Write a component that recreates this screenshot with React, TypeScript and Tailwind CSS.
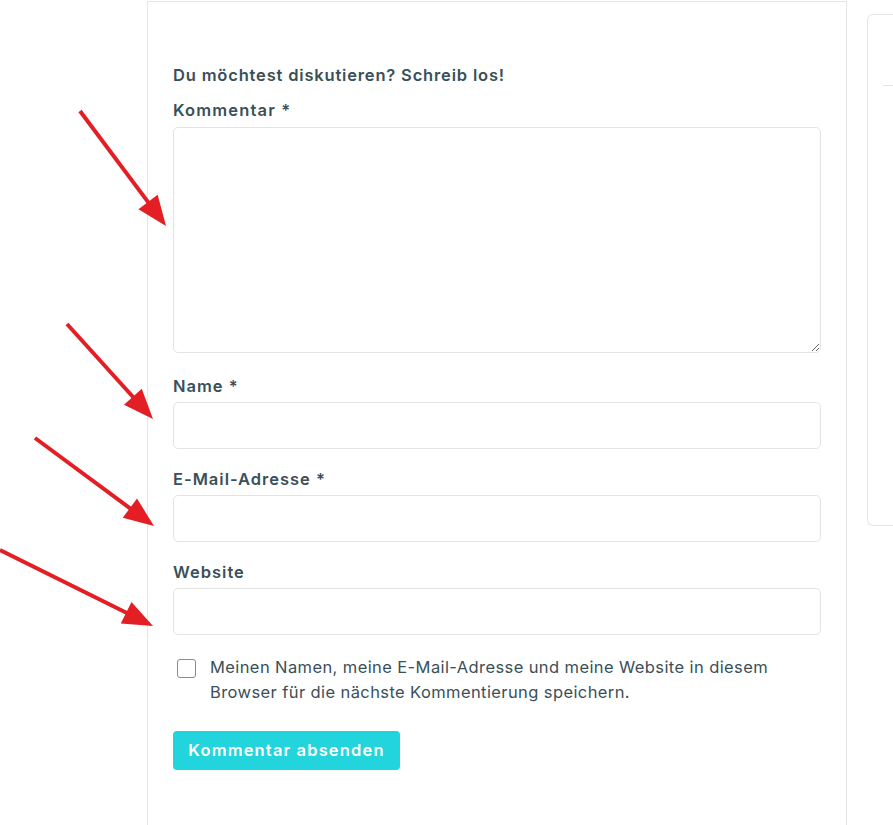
import React from "react";

const head = { fontFamily: "Inter, 'Noto Sans', sans-serif" };

function Arrow({ x1, y1, x2, y2 }: { x1: number; y1: number; x2: number; y2: number }) {
  const dx = x2 - x1;
  const dy = y2 - y1;
  const len = Math.hypot(dx, dy);
  const ux = dx / len;
  const uy = dy / len;
  const hl = 30;
  const hw = 12;
  const bx = x2 - ux * hl;
  const by = y2 - uy * hl;
  const p1 = `${bx - uy * hw},${by + ux * hw}`;
  const p2 = `${bx + uy * hw},${by - ux * hw}`;
  return (
    <g>
      <line x1={x1} y1={y1} x2={bx + ux * 2} y2={by + uy * 2} stroke="#e31e24" strokeWidth={4} />
      <polygon points={`${x2},${y2} ${p1} ${p2}`} fill="#e31e24" />
    </g>
  );
}

export default function App() {
  return (
    <div className="relative w-[893px] h-[825px] bg-white overflow-hidden" style={head}>
      <div className="flex h-full">
        <div className="w-[147px] shrink-0" />
        <div className="w-[700px] shrink-0 border-l border-r border-t border-[#e6e6e6] mt-px pl-[25px] pr-[25px] pt-[61px] text-[#3a5058]">
          <h3 className="text-[16.5px] leading-6 font-semibold tracking-[0.05em]">Du möchtest diskutieren? Schreib los!</h3>
          <label className="block mt-[11px] text-[16.5px] leading-6 font-semibold tracking-[0.07em]">Kommentar *</label>
          <textarea className="block mt-[5px] w-full h-[226px] border border-[#e3e3e3] rounded-[5px] bg-white" />
          <label className="block mt-[21px] text-[16.5px] leading-6 font-semibold tracking-[0.06em]">Name *</label>
          <input className="block mt-[4px] w-full h-[47px] border border-[#e3e3e3] rounded-[5px]" />
          <label className="block mt-[18px] text-[16.5px] leading-6 font-semibold tracking-[0.06em]">E-Mail-Adresse *</label>
          <input className="block mt-[4px] w-full h-[47px] border border-[#e3e3e3] rounded-[5px]" />
          <label className="block mt-[18px] text-[16.5px] leading-6 font-semibold tracking-[0.06em]">Website</label>
          <input className="block mt-[4px] w-full h-[47px] border border-[#e3e3e3] rounded-[5px]" />
          <div className="flex mt-[20px]">
            <div className="w-[37px] shrink-0 pl-[4px] pt-[4px]">
              <div className="w-[19px] h-[19px] border border-[#8a8a95] rounded-[3px] bg-white" />
            </div>
            <p className="max-w-[600px] text-[16.5px] leading-[25px] font-normal tracking-[0.4px]">
              Meinen Namen, meine E-Mail-Adresse und meine Website in diesem Browser für die nächste Kommentierung speichern.
            </p>
          </div>
          <button className="mt-[26px] w-[227px] h-[39px] rounded-[4px] bg-[#22d4dc] text-white text-[16.5px] font-semibold tracking-[0.07em]">
            Kommentar absenden
          </button>
        </div>
        <div className="ml-[20px] mt-[14px] w-[40px] h-[512px] border border-r-0 border-[#e6e6e6] rounded-l-[6px] pt-[70px] pl-[15px]">
          <div className="h-px bg-[#e3e3e3]" />
        </div>
      </div>
      <svg className="absolute inset-0 pointer-events-none" width={893} height={825}>
        <Arrow x1={80} y1={111} x2={166} y2={226} />
        <Arrow x1={67} y1={324} x2={153} y2={419} />
        <Arrow x1={35} y1={438} x2={154} y2={526} />
        <Arrow x1={0} y1={550} x2={153} y2={626} />
      </svg>
    </div>
  );
}
